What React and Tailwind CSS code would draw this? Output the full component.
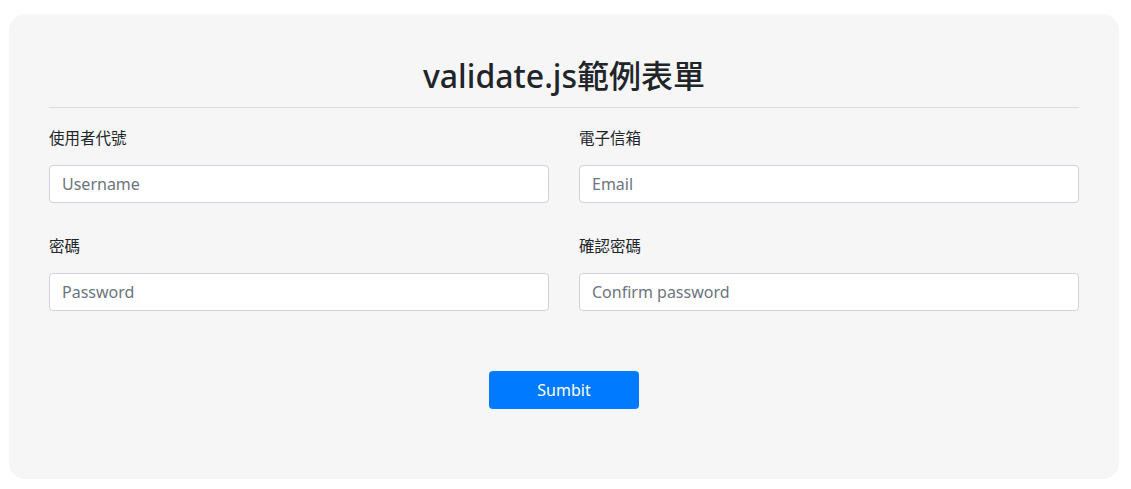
import React from "react";

const fields = [
  { label: "使用者代號", placeholder: "Username", type: "text" },
  { label: "電子信箱", placeholder: "Email", type: "email" },
  { label: "密碼", placeholder: "Password", type: "password" },
  { label: "確認密碼", placeholder: "Confirm password", type: "password" },
];

function App() {
  return (
    <div
      className="w-screen min-h-screen bg-white pt-[14px] pl-[9px] pr-[12px]"
      style={{ fontFamily: '"Noto Sans", "Noto Sans CJK TC", sans-serif' }}
    >
      <div className="bg-[#f6f6f6] rounded-[16px] px-[40px] pt-[40px] pb-[70px]">
        <h1 className="text-center text-[32px] leading-[44px] font-medium text-[#212529] mb-[9px]">
          validate.js範例表單
        </h1>
        <hr className="border-0 border-t border-[#dcdcdc]" />
        <form className="grid grid-cols-2 gap-x-[30px] gap-y-[32px] mt-[19px]">
          {fields.map((f) => (
            <div key={f.placeholder} className="flex flex-col">
              <label className="text-[15.5px] leading-[22px] text-[#212529] mb-[16px]">
                {f.label}
              </label>
              <input
                type={f.type}
                placeholder={f.placeholder}
                className="h-[38px] bg-white border border-[#ced4da] rounded-[4px] px-[12px] text-[16px] text-[#495057] placeholder:text-[#6c757d] outline-none"
              />
            </div>
          ))}
        </form>
        <div className="flex justify-center mt-[60px]">
          <button
            type="button"
            className="w-[150px] h-[38px] bg-[#007bff] text-white text-[16px] rounded-[4px]"
          >
            Sumbit
          </button>
        </div>
      </div>
    </div>
  );
}

export default App;
